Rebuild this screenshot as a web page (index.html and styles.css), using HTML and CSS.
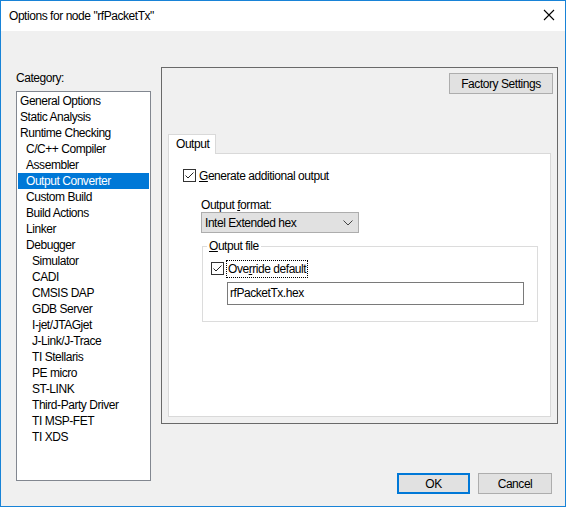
FILE: index.html
```html
<!DOCTYPE html>
<html>
<head>
<meta charset="utf-8">
<link rel="stylesheet" href="styles.css">
</head>
<body>
<div class="window">
  <div class="titlebar">
    <span class="title">Options for node "rfPacketTx"</span>
    <svg class="close" width="12" height="12" viewBox="0 0 12 12"><path d="M1 1L11 11M11 1L1 11" stroke="#000" stroke-width="1.1" fill="none"/></svg>
  </div>
  <div class="body">
    <div class="leftcol">
      <div class="catlabel">Category:</div>
      <div class="list">
        <div class="item">General Options</div>
        <div class="item">Static Analysis</div>
        <div class="item">Runtime Checking</div>
        <div class="item l1">C/C++ Compiler</div>
        <div class="item l1">Assembler</div>
        <div class="item l1 sel">Output Converter</div>
        <div class="item l1">Custom Build</div>
        <div class="item l1">Build Actions</div>
        <div class="item l1">Linker</div>
        <div class="item l1">Debugger</div>
        <div class="item l2">Simulator</div>
        <div class="item l2">CADI</div>
        <div class="item l2">CMSIS DAP</div>
        <div class="item l2">GDB Server</div>
        <div class="item l2">I-jet/JTAGjet</div>
        <div class="item l2">J-Link/J-Trace</div>
        <div class="item l2">TI Stellaris</div>
        <div class="item l2">PE micro</div>
        <div class="item l2">ST-LINK</div>
        <div class="item l2">Third-Party Driver</div>
        <div class="item l2">TI MSP-FET</div>
        <div class="item l2">TI XDS</div>
      </div>
    </div>
    <div class="panel">
      <div class="panel-top">
        <div class="btn factory">Factory Settings</div>
      </div>
      <div class="tabs">
        <div class="tab">Output</div>
      </div>
      <div class="page">
        <div class="check-row gen">
          <span class="cb"><svg width="11" height="11" viewBox="0 0 11 11"><path d="M1.5 5.5L4 8L9.5 2.5" stroke="#222" stroke-width="1" fill="none"/></svg></span>
          <span class="cbtext"><u>G</u>enerate additional output</span>
        </div>
        <div class="indent">
          <div class="fmtlabel">Output <u>f</u>ormat:</div>
          <div class="select">
            <span>Intel Extended hex</span>
            <svg class="chev" width="10" height="6" viewBox="0 0 10 6"><path d="M0.5 0.5L5 5L9.5 0.5" stroke="#444" stroke-width="1" fill="none"/></svg>
          </div>
          <div class="group">
            <div class="legend"><u>O</u>utput file</div>
            <div class="check-row ovr">
              <span class="cb"><svg width="11" height="11" viewBox="0 0 11 11"><path d="M1.5 5.5L4 8L9.5 2.5" stroke="#222" stroke-width="1" fill="none"/></svg></span>
              <span class="cbtext focus">Ove<u>r</u>ride default</span>
            </div>
            <div class="textbox">rfPacketTx.hex</div>
          </div>
        </div>
      </div>
    </div>
    <div class="buttons">
      <div class="btn ok">OK</div>
      <div class="btn cancel">Cancel</div>
    </div>
  </div>
</div>
</body>
</html>
```
FILE: styles.css
```css
html, body {
  margin: 0;
  padding: 0;
}
body {
  font-family: "Liberation Sans", Arial, sans-serif;
  font-size: 12px;
  letter-spacing: -0.45px;
  color: #000;
  background: #f0f0f0;
}
.window {
  width: 566px;
  height: 507px;
  box-sizing: border-box;
  border: 1px solid #1883d7;
  display: flex;
  flex-direction: column;
  background: #f0f0f0;
  overflow: hidden;
}
.titlebar {
  height: 30px;
  background: #fff;
  display: flex;
  align-items: center;
  justify-content: space-between;
  padding: 0 10px 0 8px;
  flex: none;
}
.title {
  font-size: 12px;
  margin-top: -1px;
}
.close {
  margin-top: -2px;
}
.body {
  display: grid;
  grid-template-columns: 135px 397px;
  grid-template-rows: 357px 70px;
  column-gap: 10px;
  padding: 36px 7px 0 15px;
}
.leftcol {
  grid-row: 1 / span 2;
  grid-column: 1;
  padding-top: 3px;
  display: flex;
  flex-direction: column;
}
.catlabel {
  line-height: 16px;
  height: 16px;
  margin-bottom: 5px;
}
.list {
  height: 390px;
  box-sizing: border-box;
  border: 1px solid #828790;
  background: #fff;
  padding: 1px 1px;
}
.item {
  height: 16px;
  line-height: 16px;
  padding-left: 2px;
  white-space: nowrap;
}
.item.l1 { padding-left: 8px; }
.item.l2 { padding-left: 14px; }
.item.sel {
  background: #0078d7;
  color: #fff;
}
.panel {
  grid-row: 1;
  grid-column: 2;
  box-sizing: border-box;
  border: 1px solid #696969;
  padding: 0 6px 6px 6px;
  display: flex;
  flex-direction: column;
}
.panel-top {
  display: flex;
  justify-content: flex-end;
  align-items: flex-start;
  padding-top: 5px;
  margin-right: -2px;
  height: 66px;
  box-sizing: border-box;
}
.btn {
  box-sizing: border-box;
  height: 21px;
  border: 1px solid #adadad;
  background: #e1e1e1;
  display: flex;
  align-items: center;
  justify-content: center;
}
.factory {
  width: 104px;
}
.tabs {
  display: flex;
  height: 20px;
  position: relative;
  z-index: 1;
}
.tab {
  width: 48px;
  height: 20px;
  box-sizing: border-box;
  border: 1px solid #d9d9d9;
  border-bottom: none;
  background: #fff;
  padding-left: 7px;
  line-height: 19px;
}
.page {
  flex: 1;
  margin-top: -1px;
  border: 1px solid #d9d9d9;
  background: #fff;
  padding: 15px 0 0 14px;
}
.check-row {
  display: flex;
  align-items: center;
  height: 13px;
}
.cb {
  width: 13px;
  height: 13px;
  box-sizing: border-box;
  border: 1px solid #333;
  background: #fff;
  display: flex;
  align-items: center;
  justify-content: center;
  flex: none;
}
.cbtext {
  margin-left: 3px;
  line-height: 14px;
}
.indent {
  padding-left: 18px;
  padding-top: 16px;
}
.fmtlabel {
  line-height: 14px;
  height: 14px;
}
.select {
  margin-top: 0;
  width: 158px;
  height: 21px;
  box-sizing: border-box;
  border: 1px solid #adadad;
  background: #e1e1e1;
  display: flex;
  align-items: center;
  justify-content: space-between;
  padding: 0 5px 0 3px;
}
.chev {
  margin-top: 1px;
}
.group {
  margin-top: 13px;
  margin-left: 1px;
  width: 336px;
  height: 76px;
  box-sizing: border-box;
  border: 1px solid #dcdcdc;
  position: relative;
  padding: 15px 0 0 8px;
}
.legend {
  position: absolute;
  top: -8px;
  left: 4px;
  background: #fff;
  padding: 0 2px;
  line-height: 14px;
}
.focus {
  outline: 1px dotted #000;
  outline-offset: 1px;
  margin-left: 4px;
}
.textbox {
  margin: 7px 0 0 16px;
  width: 297px;
  height: 23px;
  box-sizing: border-box;
  border: 1px solid #7a7a7a;
  background: #fff;
  padding-left: 2px;
  line-height: 21px;
}
.buttons {
  grid-row: 2;
  grid-column: 2;
  display: flex;
  justify-content: flex-end;
  align-items: flex-end;
  gap: 8px;
  padding-right: 6px;
}
.ok {
  width: 73px;
  border: 2px solid #0078d7;
}
.cancel {
  width: 74px;
}
```
